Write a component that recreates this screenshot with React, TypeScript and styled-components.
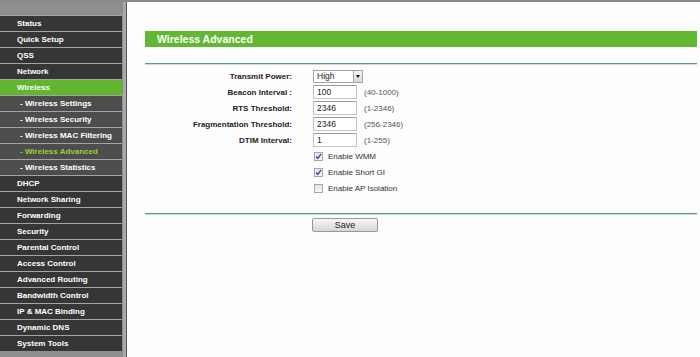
import React from 'react';
import styled, { createGlobalStyle } from 'styled-components';

const GlobalStyle = createGlobalStyle`
  html, body {
    margin: 0;
    padding: 0;
    background: #fdfdfd;
    font-family: "Liberation Sans", Arial, sans-serif;
  }
`;

interface MenuItem {
  label: string;
  sub?: boolean;
  active?: boolean;
}

const menu: MenuItem[] = [
  { label: 'Status' },
  { label: 'Quick Setup' },
  { label: 'QSS' },
  { label: 'Network' },
  { label: 'Wireless', active: true },
  { label: '- Wireless Settings', sub: true },
  { label: '- Wireless Security', sub: true },
  { label: '- Wireless MAC Filtering', sub: true },
  { label: '- Wireless Advanced', sub: true, active: true },
  { label: '- Wireless Statistics', sub: true },
  { label: 'DHCP' },
  { label: 'Network Sharing' },
  { label: 'Forwarding' },
  { label: 'Security' },
  { label: 'Parental Control' },
  { label: 'Access Control' },
  { label: 'Advanced Routing' },
  { label: 'Bandwidth Control' },
  { label: 'IP & MAC Binding' },
  { label: 'Dynamic DNS' },
  { label: 'System Tools' },
];

const Page = styled.div`
  display: grid;
  grid-template-columns: 127px 1fr;
  height: 357px;
  border-top: 2px solid #8a8a8a;
  box-sizing: border-box;
  overflow: hidden;
`;

const Sidebar = styled.nav`
  display: flex;
  flex-direction: column;
  background: #8e8e8e;
  border-right: 1px solid #555;
  box-shadow: inset -3px 0 0 #a9a9a9;
  padding-top: 13px;
  padding-right: 4px;
`;

const MenuRow = styled.div<{ $sub?: boolean; $active?: boolean }>`
  height: 15px;
  border-top: 1px solid #a4a4a4;
  display: flex;
  align-items: center;
  padding-left: ${({ $sub }) => ($sub ? '20px' : '17px')};
  background: ${({ $sub, $active }) =>
    $active && !$sub ? '#62b62f' : $sub ? '#4d4d4d' : '#363636'};
  color: ${({ $sub, $active }) => ($active && $sub ? '#9ccf34' : '#fff')};
  font-size: 8px;
  font-weight: bold;
  white-space: nowrap;
`;

const Content = styled.main`
  padding: 29px 3px 0 18px;
`;

const TitleBar = styled.h1`
  margin: 0;
  height: 16px;
  background: #62b832;
  color: #fff;
  font-size: 10.5px;
  font-weight: bold;
  display: flex;
  align-items: center;
  padding-left: 12px;
`;

const Divider = styled.div<{ $gap?: number }>`
  height: 1px;
  margin-top: ${({ $gap }) => $gap ?? 0}px;
  background: #5f9586;
  border-bottom: 1px solid #c7ddd6;
`;

const Form = styled.div`
  display: grid;
  grid-template-columns: 168px 51px auto;
  grid-auto-rows: 16px;
  margin: 3px 0 17px;
`;

const Label = styled.div`
  font-size: 8px;
  font-weight: bold;
  color: #222;
  padding-right: 21px;
  display: flex;
  align-items: center;
  justify-content: flex-end;
`;

const Field = styled.div`
  display: flex;
  align-items: center;
`;

const Hint = styled.div`
  font-size: 8px;
  color: #555;
  display: flex;
  align-items: center;
`;

const TextBox = styled.div`
  width: 44px;
  height: 14px;
  box-sizing: border-box;
  border: 1px solid #c4c4c4;
  border-top-color: #9a9a9a;
  background: #fff;
  font-size: 8.5px;
  color: #222;
  padding-left: 3px;
  display: flex;
  align-items: center;
`;

const SelectBox = styled.div`
  width: 50px;
  height: 13px;
  box-sizing: border-box;
  border: 1px solid #a5a5a5;
  background: #fff;
  font-size: 8.5px;
  color: #222;
  display: flex;
  align-items: center;
  justify-content: space-between;
  padding-left: 3px;
`;

const SelectArrow = styled.span`
  width: 9px;
  height: 11px;
  box-sizing: border-box;
  border-left: 1px solid #a5a5a5;
  background: linear-gradient(#f4f4f4, #d9d9d9);
  display: flex;
  align-items: center;
  justify-content: center;
  &::after {
    content: '';
    border-left: 2px solid transparent;
    border-right: 2px solid transparent;
    border-top: 3px solid #111;
  }
`;

const CheckRow = styled.label`
  grid-column: 2 / span 2;
  display: flex;
  align-items: center;
  gap: 5px;
  font-size: 8px;
  color: #333;
  padding-left: 1px;
`;

const Check = styled.span`
  width: 9px;
  height: 9px;
  box-sizing: border-box;
  border: 1px solid #a8a8a8;
  background: linear-gradient(#e2e2e2, #f8f8f8);
  display: flex;
  align-items: center;
  justify-content: center;
`;

const Footer = styled.div`
  display: flex;
  padding: 3px 0 0 167px;
`;

const SaveButton = styled.button`
  width: 66px;
  height: 14px;
  padding: 0;
  border: 1px solid #9a9a9a;
  border-radius: 2px;
  background: linear-gradient(#f6f6f6, #d6d6d6);
  font-family: "Liberation Sans", Arial, sans-serif;
  font-size: 9px;
  color: #222;
`;

const Tick = () => (
  <svg width="7" height="7" viewBox="0 0 7 7">
    <path d="M1 3.5 L2.8 5.5 L6 1.2" fill="none" stroke="#2b4f8a" strokeWidth="1.3" />
  </svg>
);

const fields = [
  { label: 'Beacon Interval :', value: '100', hint: '(40-1000)' },
  { label: 'RTS Threshold:', value: '2346', hint: '(1-2346)' },
  { label: 'Fragmentation Threshold:', value: '2346', hint: '(256-2346)' },
  { label: 'DTIM Interval:', value: '1', hint: '(1-255)' },
];

const checks = [
  { label: 'Enable WMM', checked: true },
  { label: 'Enable Short GI', checked: true },
  { label: 'Enable AP Isolation', checked: false },
];

export default function App() {
  return (
    <>
      <GlobalStyle />
      <Page>
        <Sidebar>
          {menu.map(item => (
            <MenuRow key={item.label} $sub={item.sub} $active={item.active}>
              {item.label}
            </MenuRow>
          ))}
        </Sidebar>
        <Content>
          <TitleBar>Wireless Advanced</TitleBar>
          <Divider $gap={16} />
          <Form>
            <Label>Transmit Power:</Label>
            <Field>
              <SelectBox>
                High
                <SelectArrow />
              </SelectBox>
            </Field>
            <Hint />
            {fields.map(f => (
              <React.Fragment key={f.label}>
                <Label>{f.label}</Label>
                <Field>
                  <TextBox>{f.value}</TextBox>
                </Field>
                <Hint>{f.hint}</Hint>
              </React.Fragment>
            ))}
            {checks.map(c => (
              <React.Fragment key={c.label}>
                <div />
                <CheckRow>
                  <Check>{c.checked && <Tick />}</Check>
                  {c.label}
                </CheckRow>
              </React.Fragment>
            ))}
          </Form>
          <Divider />
          <Footer>
            <SaveButton>Save</SaveButton>
          </Footer>
        </Content>
      </Page>
    </>
  );
}
